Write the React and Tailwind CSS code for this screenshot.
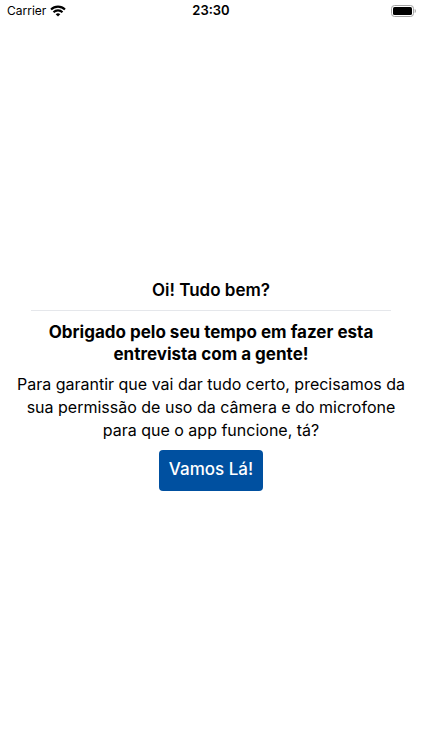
function WifiIcon() {
  return (
    <svg width="16" height="12" viewBox="0 0 16 12" fill="none" stroke="#000" strokeWidth="2.1">
      <path d="M1 4.500a10 10 0 0 1 14 0" />
      <path d="M3.500 7.200a6.400 6.400 0 0 1 9 0" />
      <path d="M8 11.600 5.700 9.300a3.300 3.300 0 0 1 4.600 0z" fill="#000" stroke="none" />
    </svg>
  );
}

function BatteryIcon() {
  return (
    <svg width="25" height="12" viewBox="0 0 25 12">
      <rect x="0.5" y="0.5" width="22" height="11" rx="3" fill="none" stroke="#a3a3a3" />
      <rect x="2" y="2" width="19" height="8" rx="1.6" fill="#000" />
      <path d="M23.700 4v4c.8-.3 1.200-1.100 1.200-2s-.4-1.700-1.200-2z" fill="#a3a3a3" />
    </svg>
  );
}

function StatusBar() {
  return (
    <header className="grid h-[22px] grid-cols-3 items-center px-1.5 text-xs">
      <div className="flex items-center gap-1 pl-px">
        <span>Carrier</span>
        <WifiIcon />
      </div>
      <time className="text-center text-[13px] font-semibold">23:30</time>
      <div className="flex justify-end">
        <BatteryIcon />
      </div>
    </header>
  );
}

export default function App() {
  return (
    <div className="flex min-h-screen flex-col bg-white font-[Inter,sans-serif] text-black">
      <StatusBar />
      <main className="flex flex-1 flex-col items-center justify-center px-2 pb-1 text-center">
        <h1 className="text-[17px] leading-6 font-semibold">Oi! Tudo bem?</h1>
        <hr className="mt-2 mb-2.5 w-[360px] max-w-full border-gray-200" />
        <h2 className="text-[17px] leading-[22px] font-bold">
          Obrigado pelo seu tempo em fazer esta
          <br />
          entrevista com a gente!
        </h2>
        <p className="mt-2 text-base leading-[23px]">
          Para garantir que vai dar tudo certo, precisamos da
          <br />
          sua permissão de uso da câmera e do microfone
          <br />
          para que o app funcione, tá?
        </p>
        <button
          type="button"
          className="mt-2 h-[41px] rounded bg-[#0050a0] px-2.5 text-[17px] font-medium text-white"
        >
          Vamos Lá!
        </button>
      </main>
    </div>
  );
}
